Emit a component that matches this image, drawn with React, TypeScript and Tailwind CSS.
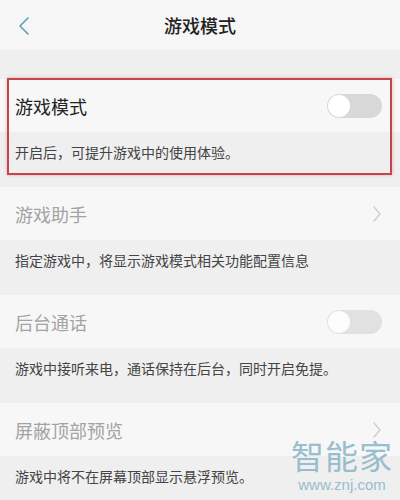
import React from 'react';

const font = { fontFamily: '"Noto Sans CJK SC", "Noto Sans", sans-serif' };

function Toggle({ faded }: { faded?: boolean }) {
  return (
    <div className={`w-[55px] h-[24px] rounded-full bg-[#d8d8d8] flex items-center px-[1px] ${faded ? 'opacity-70' : ''}`}>
      <div className="w-[22px] h-[22px] rounded-full bg-white" />
    </div>
  );
}

function Chevron() {
  return (
    <svg width="10" height="18" viewBox="0 0 10 18" fill="none">
      <path d="M2 2 L8 9 L2 16" stroke="#cfcfcf" strokeWidth="1.4" strokeLinecap="round" strokeLinejoin="round" />
    </svg>
  );
}

function Section({ title, desc, active, right }: { title: string; desc: string; active?: boolean; right: React.ReactNode }) {
  return (
    <div>
      <div className="h-[53px] bg-[#f7f7f7] flex items-center justify-between pl-[15px] pr-[18px]">
        <span className={`text-[18px] leading-[24px] ${active ? 'text-[#222]' : 'text-[#a3a3a3]'}`}>{title}</span>
        {right}
      </div>
      <div className="h-[55px] bg-[#efefef] pl-[15px] pt-[7px]">
        <span className="text-[14px] leading-[20px] text-[#444]">{desc}</span>
      </div>
    </div>
  );
}

export default function App() {
  return (
    <div className="relative w-[400px] h-[500px] overflow-hidden bg-[#efefef]" style={font}>
      <div className="h-[50px] bg-[#f6f6f6] flex items-center justify-center relative">
        <svg className="absolute left-[17px] top-[16px]" width="14" height="20" viewBox="0 0 14 20" fill="none">
          <path d="M11 2 L3 10 L11 18" stroke="#5f9bb6" strokeWidth="1.6" strokeLinecap="round" strokeLinejoin="round" />
        </svg>
        <span className="text-[18px] leading-[24px] font-medium text-[#222]">游戏模式</span>
      </div>
      <div className="h-[29px]" />
      <Section title="游戏模式" desc="开启后，可提升游戏中的使用体验。" active right={<Toggle />} />
      <Section title="游戏助手" desc="指定游戏中，将显示游戏模式相关功能配置信息" right={<Chevron />} />
      <Section title="后台通话" desc="游戏中接听来电，通话保持在后台，同时开启免提。" right={<Toggle faded />} />
      <Section title="屏蔽顶部预览" desc="游戏中将不在屏幕顶部显示悬浮预览。" right={<Chevron />} />

      {/* annotation box */}
      <div className="absolute left-[7px] top-[78px] w-[385px] h-[97px] border-2 border-[#c4464c] shadow-[0_0_3px_rgba(220,120,120,0.6)]" />

      {/* watermark */}
      <div className="absolute left-[291px] top-[439px] flex flex-col items-center text-[#8db9c9] opacity-90">
        <span className="text-[33px] leading-[33px] tracking-[1px]">智能家</span>
        <span className="text-[15px] leading-[17px] mt-[4px]" style={{ fontFamily: '"Liberation Sans", sans-serif' }}>www.znj.com</span>
      </div>
    </div>
  );
}
